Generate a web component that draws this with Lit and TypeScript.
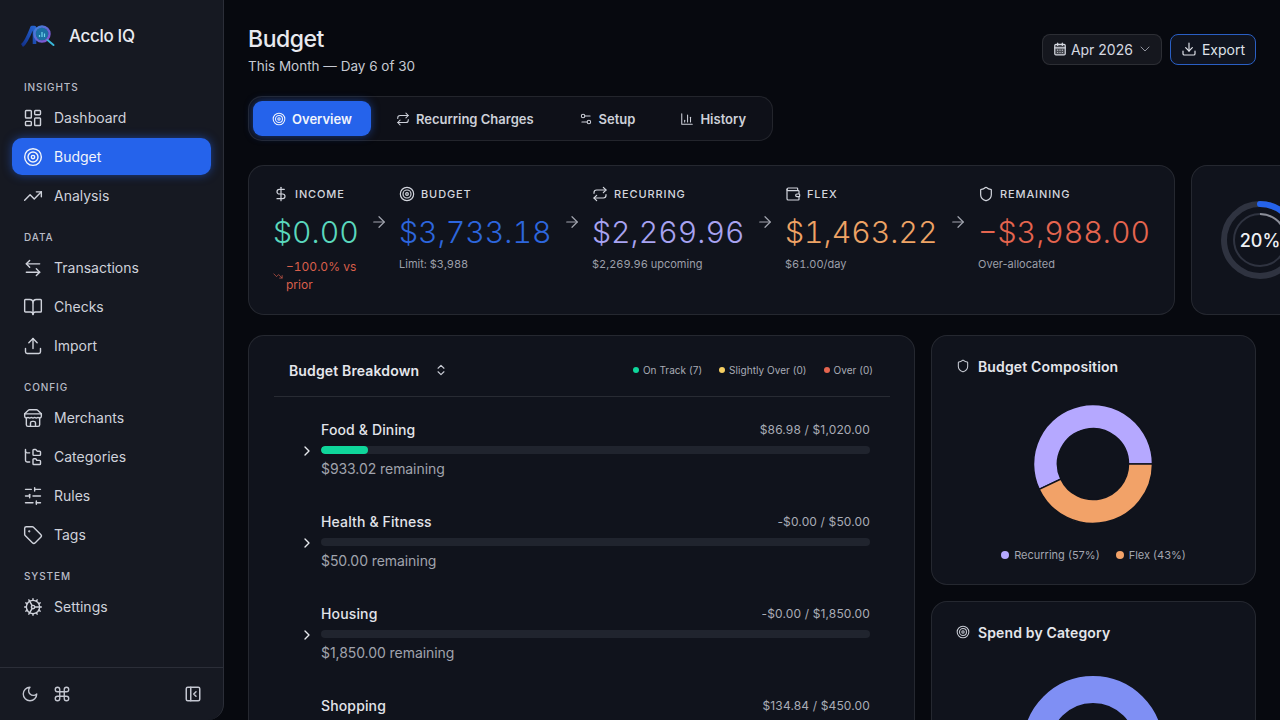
import { LitElement, css, html, svg } from "lit";
import { customElement } from "lit/decorators.js";

const ICONS: Record<string, any> = {
  dashboard: svg`<rect width="7" height="9" x="3" y="3" rx="1"/><rect width="7" height="5" x="14" y="3" rx="1"/><rect width="7" height="9" x="14" y="12" rx="1"/><rect width="7" height="5" x="3" y="16" rx="1"/>`,
  target: svg`<circle cx="12" cy="12" r="10"/><circle cx="12" cy="12" r="6"/><circle cx="12" cy="12" r="2"/>`,
  trending: svg`<polyline points="22 7 13.5 15.5 8.5 10.5 2 17"/><polyline points="16 7 22 7 22 13"/>`,
  trendingDown: svg`<polyline points="22 17 13.5 8.5 8.5 13.5 2 7"/><polyline points="16 17 22 17 22 11"/>`,
  transfer: svg`<path d="M8 3 4 7l4 4"/><path d="M4 7h16"/><path d="m16 21 4-4-4-4"/><path d="M20 17H4"/>`,
  book: svg`<path d="M12 7v14"/><path d="M3 18a1 1 0 0 1-1-1V4a1 1 0 0 1 1-1h5a4 4 0 0 1 4 4 4 4 0 0 1 4-4h5a1 1 0 0 1 1 1v13a1 1 0 0 1-1 1h-6a3 3 0 0 0-3 3 3 3 0 0 0-3-3z"/>`,
  upload: svg`<path d="M21 15v4a2 2 0 0 1-2 2H5a2 2 0 0 1-2-2v-4"/><path d="m17 8-5-5-5 5"/><path d="M12 3v12"/>`,
  store: svg`<path d="m2 7 4.41-4.41A2 2 0 0 1 7.83 2h8.34a2 2 0 0 1 1.42.59L22 7"/><path d="M4 12v8a2 2 0 0 0 2 2h12a2 2 0 0 0 2-2v-8"/><path d="M15 22v-4a2 2 0 0 0-2-2h-2a2 2 0 0 0-2 2v4"/><path d="M2 7h20"/><path d="M22 7v3a2 2 0 0 1-2 2 2.7 2.7 0 0 1-1.59-.63.7.7 0 0 0-.82 0A2.7 2.7 0 0 1 16 12a2.7 2.7 0 0 1-1.59-.63.7.7 0 0 0-.82 0A2.7 2.7 0 0 1 12 12a2.7 2.7 0 0 1-1.59-.63.7.7 0 0 0-.82 0A2.7 2.7 0 0 1 8 12a2.7 2.7 0 0 1-1.59-.63.7.7 0 0 0-.82 0A2.7 2.7 0 0 1 4 12a2 2 0 0 1-2-2V7"/>`,
  folders: svg`<path d="M20 10a1 1 0 0 0 1-1V6a1 1 0 0 0-1-1h-2.5a1 1 0 0 1-.8-.4l-.9-1.2A1 1 0 0 0 15 3h-2a1 1 0 0 0-1 1v5a1 1 0 0 0 1 1Z"/><path d="M20 21a1 1 0 0 0 1-1v-3a1 1 0 0 0-1-1h-2.9a1 1 0 0 1-.88-.55l-.42-.85a1 1 0 0 0-.92-.6H13a1 1 0 0 0-1 1v5a1 1 0 0 0 1 1Z"/><path d="M3 5a2 2 0 0 0 2 2h3"/><path d="M3 3v13a2 2 0 0 0 2 2h3"/>`,
  sliders: svg`<path d="M21 4h-7"/><path d="M10 4H3"/><path d="M21 12h-9"/><path d="M8 12H3"/><path d="M21 20h-5"/><path d="M12 20H3"/><path d="M14 2v4"/><path d="M8 10v4"/><path d="M16 18v4"/>`,
  tag: svg`<path d="M12.586 2.586A2 2 0 0 0 11.172 2H4a2 2 0 0 0-2 2v7.172a2 2 0 0 0 .586 1.414l8.704 8.704a2.426 2.426 0 0 0 3.42 0l6.58-6.58a2.426 2.426 0 0 0 0-3.42z"/><circle cx="7.5" cy="7.5" r=".5" fill="currentColor"/>`,
  cog: svg`<path d="M12 20a8 8 0 1 0 0-16 8 8 0 0 0 0 16Z"/><path d="M12 14a2 2 0 1 0 0-4 2 2 0 0 0 0 4Z"/><path d="M12 2v2"/><path d="M12 22v-2"/><path d="m17 20.66-1-1.73"/><path d="M11 10.27 7 3.34"/><path d="m20.66 17-1.73-1"/><path d="m3.34 7 1.73 1"/><path d="M14 12h8"/><path d="M2 12h2"/><path d="m20.66 7-1.73 1"/><path d="m3.34 17 1.73-1"/><path d="m17 3.34-1 1.73"/><path d="m11 13.73-4 6.93"/>`,
  moon: svg`<path d="M12 3a6 6 0 0 0 9 9 9 9 0 1 1-9-9Z"/>`,
  command: svg`<path d="M15 6v12a3 3 0 1 0 3-3H6a3 3 0 1 0 3 3V6a3 3 0 1 0-3 3h12a3 3 0 1 0-3-3"/>`,
  panel: svg`<rect width="18" height="18" x="3" y="3" rx="2"/><path d="M9 3v18"/><path d="m16 15-3-3 3-3"/>`,
  repeat: svg`<path d="m17 2 4 4-4 4"/><path d="M3 11v-1a4 4 0 0 1 4-4h14"/><path d="m7 22-4-4 4-4"/><path d="M21 13v1a4 4 0 0 1-4 4H3"/>`,
  setup: svg`<path d="M14 17H5"/><path d="M19 7h-9"/><circle cx="17" cy="17" r="3"/><circle cx="7" cy="7" r="3"/>`,
  chart: svg`<path d="M3 3v18h18"/><path d="M18 17V9"/><path d="M13 17V5"/><path d="M8 17v-3"/>`,
  dollar: svg`<path d="M12 2v20"/><path d="M17 5H9.5a3.5 3.5 0 0 0 0 7h5a3.5 3.5 0 0 1 0 7H6"/>`,
  wallet: svg`<path d="M19 7V4a1 1 0 0 0-1-1H5a2 2 0 0 0 0 4h15a1 1 0 0 1 1 1v4h-3a2 2 0 0 0 0 4h3a1 1 0 0 0 1-1v-2a1 1 0 0 0-1-1"/><path d="M3 5v14a2 2 0 0 0 2 2h15a1 1 0 0 0 1-1v-4"/>`,
  shield: svg`<path d="M20 13c0 5-3.5 7.5-7.66 8.95a1 1 0 0 1-.67-.01C7.5 20.5 4 18 4 13V6a1 1 0 0 1 1-1c2 0 4.5-1.2 6.24-2.72a1.17 1.17 0 0 1 1.52 0C14.51 3.81 17 5 19 5a1 1 0 0 1 1 1z"/>`,
  arrow: svg`<path d="M5 12h14"/><path d="m12 5 7 7-7 7"/>`,
  calendar: svg`<path d="M8 2v4"/><path d="M16 2v4"/><rect width="18" height="18" x="3" y="4" rx="2" fill="currentColor" fill-opacity=".25"/><path d="M3 10h18"/><path d="M8 14h.01"/><path d="M12 14h.01"/><path d="M16 14h.01"/><path d="M8 18h.01"/><path d="M12 18h.01"/><path d="M16 18h.01"/>`,
  chevronDown: svg`<path d="m6 9 6 6 6-6"/>`,
  chevronRight: svg`<path d="m9 18 6-6-6-6"/>`,
  chevrons: svg`<path d="m7 15 5 5 5-5"/><path d="m7 9 5-5 5 5"/>`,
  download: svg`<path d="M21 15v4a2 2 0 0 1-2 2H5a2 2 0 0 1-2-2v-4"/><path d="m7 10 5 5 5-5"/><path d="M12 15V3"/>`,
};

const icon = (name: string, size = 20, width = 2) => html`<svg
  class="ic"
  width=${size}
  height=${size}
  viewBox="0 0 24 24"
  fill="none"
  stroke="currentColor"
  stroke-width=${width}
  stroke-linecap="round"
  stroke-linejoin="round"
>${ICONS[name]}</svg>`;

const NAV = [
  { title: "INSIGHTS", items: [["dashboard", "Dashboard"], ["target", "Budget"], ["trending", "Analysis"]] },
  { title: "DATA", items: [["transfer", "Transactions"], ["book", "Checks"], ["upload", "Import"]] },
  { title: "CONFIG", items: [["store", "Merchants"], ["folders", "Categories"], ["sliders", "Rules"], ["tag", "Tags"]] },
  { title: "SYSTEM", items: [["cog", "Settings"]] },
];

const TABS = [["target", "Overview"], ["repeat", "Recurring Charges"], ["setup", "Setup"], ["chart", "History"]];

const STATS = [
  { icon: "dollar", label: "INCOME", value: "$0.00", cls: "income", sub: "" },
  { icon: "target", label: "BUDGET", value: "$3,733.18", cls: "budget", sub: "Limit: $3,988" },
  { icon: "repeat", label: "RECURRING", value: "$2,269.96", cls: "recurring", sub: "$2,269.96 upcoming" },
  { icon: "wallet", label: "FLEX", value: "$1,463.22", cls: "flex", sub: "$61.00/day" },
  { icon: "shield", label: "REMAINING", value: "−$3,988.00", cls: "remaining", sub: "Over-allocated" },
];

const ROWS = [
  { name: "Food & Dining", spent: 86.98, amount: "$86.98 / $1,020.00", limit: 1020, left: "$933.02 remaining" },
  { name: "Health & Fitness", spent: 0, amount: "-$0.00 / $50.00", limit: 50, left: "$50.00 remaining" },
  { name: "Housing", spent: 0, amount: "-$0.00 / $1,850.00", limit: 1850, left: "$1,850.00 remaining" },
  { name: "Shopping", spent: 134.84, amount: "$134.84 / $450.00", limit: 450, left: "" },
];

// donut slice, angles in degrees counter-clockwise from 3 o'clock
function slice(cx: number, cy: number, R: number, r: number, a0: number, a1: number) {
  const pt = (rad: number, a: number) => {
    const t = (a * Math.PI) / 180;
    return `${(cx + rad * Math.cos(t)).toFixed(2)} ${(cy - rad * Math.sin(t)).toFixed(2)}`;
  };
  const large = a1 - a0 > 180 ? 1 : 0;
  return `M${pt(R, a0)}A${R} ${R} 0 ${large} 0 ${pt(R, a1)}L${pt(r, a1)}A${r} ${r} 0 ${large} 1 ${pt(r, a0)}Z`;
}

@customElement("app-root")
export class AppRoot extends LitElement {
  static styles = css`
    :host {
      display: flex;
      width: 1280px;
      height: 720px;
      overflow: hidden;
      background: #07090f;
      color: #e6e8ee;
      font-family: Inter, "Noto Sans", sans-serif;
    }
    .ic {
      flex: none;
      display: block;
    }
    .sidebar {
      flex: 0 0 224px;
      box-sizing: border-box;
      height: 720px;
      display: flex;
      flex-direction: column;
      background: #161922;
      border-right: 1px solid #2b2e38;
      border-bottom-right-radius: 16px;
    }
    .brand {
      height: 72px;
      display: flex;
      align-items: center;
      gap: 13px;
      padding-left: 22px;
      font-size: 17px;
      font-weight: 500;
      letter-spacing: -0.02em;
      color: #e9ebf0;
    }
    .nav {
      flex: 1;
      padding: 8px 12px 0;
      display: flex;
      flex-direction: column;
      gap: 16px;
    }
    .group-title {
      height: 14px;
      line-height: 14px;
      margin: 0 0 5px 12px;
      font-size: 10px;
      font-weight: 500;
      letter-spacing: 0.09em;
      color: #b9bcc7;
    }
    .group-items {
      display: flex;
      flex-direction: column;
      gap: 2px;
    }
    .nav-item {
      height: 37px;
      display: flex;
      align-items: center;
      gap: 11px;
      padding-left: 11px;
      border-radius: 10px;
      font-size: 14px;
      color: #cfd2db;
    }
    .nav-item.active {
      background: #2563eb;
      color: #f1f4fb;
      box-shadow: 0 0 10px rgba(37, 99, 235, 0.55);
    }
    .foot {
      flex: 0 0 53px;
      box-sizing: border-box;
      border-top: 1px solid #2b2e38;
      display: flex;
      align-items: center;
      gap: 14px;
      padding: 0 21px;
      color: #c4c7d1;
    }
    .foot .push {
      margin-left: auto;
    }
    .main {
      flex: 1;
      min-width: 0;
      box-sizing: border-box;
      height: 720px;
      padding: 24px 24px 0;
      overflow: hidden;
    }
    .head {
      display: flex;
      align-items: center;
      justify-content: space-between;
    }
    h1 {
      margin: 0 0 1px;
      font-size: 23px;
      line-height: 31px;
      font-weight: 500;
      letter-spacing: -0.02em;
      color: #e8eaef;
    }
    .subtitle {
      font-size: 13.5px;
      line-height: 20px;
      color: #c6c9d2;
    }
    .actions {
      display: flex;
      gap: 8px;
      margin-bottom: 2px;
    }
    .btn {
      height: 31px;
      display: flex;
      align-items: center;
      gap: 4px;
      padding: 0 8px 0 10px;
      border-radius: 8px;
      border: 1px solid rgba(255, 255, 255, 0.1);
      background: #15171e;
      font-size: 14px;
      color: #d6d9e1;
      box-sizing: border-box;
    }
    .btn.export {
      border-color: #2a5fc4;
      background: #10141f;
      color: #dfe2e9;
      gap: 5px;
      padding: 0 10px;
    }
    .btn .muted {
      color: #8f929c;
    }
    .tabs {
      display: inline-flex;
      gap: 5px;
      margin-top: 20px;
      padding: 4px 6px 4px 4px;
      border: 1px solid rgba(255, 255, 255, 0.09);
      border-radius: 14px;
      background: #0e1018;
      vertical-align: top;
    }
    .tab {
      height: 35px;
      display: flex;
      align-items: center;
      gap: 6px;
      padding: 0 20px;
      border-radius: 9px;
      font-size: 13px;
      font-weight: 600;
      color: #cdd0d9;
    }
    .tab.active {
      padding: 0 19px;
      background: #2563eb;
      color: #f1f4fb;
      box-shadow: 0 0 8px rgba(37, 99, 235, 0.5);
    }
    .card {
      box-sizing: border-box;
      background: #10131c;
      border: 1px solid rgba(255, 255, 255, 0.09);
      border-radius: 16px;
    }
    .stats-row {
      display: flex;
      gap: 16px;
      margin-top: 24px;
    }
    .stats {
      flex: 0 0 927px;
      min-width: 0;
      display: flex;
      align-items: flex-start;
      padding: 20px 0 20px 24px;
    }
    .stat {
      flex: none;
      min-width: 153px;
    }
    .stat.first {
      min-width: 0;
      width: 86px;
    }
    .stat-label {
      height: 16px;
      display: flex;
      align-items: center;
      gap: 6px;
      font-size: 11px;
      font-weight: 500;
      letter-spacing: 0.08em;
      color: #d3d6de;
    }
    .value {
      margin-top: 10px;
      font-size: 30.2px;
      line-height: 40px;
      font-weight: 300;
      font-variant-numeric: tabular-nums;
      white-space: nowrap;
    }
    .income {
      color: #5ad8bd;
    }
    .budget {
      color: #2d66dd;
    }
    .recurring {
      color: #a8a3f2;
    }
    .flex {
      color: #eea365;
    }
    .remaining {
      color: #e5654f;
    }
    .sub {
      margin-top: 4px;
      font-size: 11px;
      line-height: 16px;
      font-variant-numeric: tabular-nums;
      color: #9c9fa9;
    }
    .sub.plain {
      font-variant-numeric: normal;
    }
    .delta {
      margin-top: 6px;
      display: flex;
      align-items: center;
      gap: 3px;
      font-size: 12px;
      line-height: 18px;
      font-variant-numeric: tabular-nums;
      color: #d95f4b;
    }
    .link {
      flex: 0 0 40px;
      display: flex;
      justify-content: center;
      margin-top: 27px;
      color: #a3a6b0;
    }
    .ring-card {
      flex: 0 0 138px;
      display: flex;
      align-items: center;
      justify-content: center;
    }
    .ring {
      position: relative;
      width: 80px;
      height: 80px;
      flex: none;
    }
    .ring-text {
      position: absolute;
      inset: 0;
      display: flex;
      align-items: center;
      justify-content: center;
      font-size: 18px;
      font-weight: 500;
      color: #eef0f4;
    }
    .lower {
      display: grid;
      grid-template-columns: 667px 325px;
      gap: 16px;
      margin-top: 20px;
      align-items: start;
    }
    .breakdown {
      padding: 10px 24px 40px 25px;
    }
    .bd-head {
      height: 48px;
      display: flex;
      align-items: center;
      padding: 0 17px 2px 15px;
      border-bottom: 1px solid rgba(255, 255, 255, 0.1);
    }
    .bd-title {
      font-size: 14px;
      font-weight: 600;
      letter-spacing: 0.01em;
      color: #e4e6eb;
    }
    .bd-sort {
      margin-left: 15px;
      color: #c8cbd4;
    }
    .legend {
      margin-left: auto;
      display: flex;
      gap: 17px;
      font-size: 10px;
      letter-spacing: 0.005em;
      color: #a9acb6;
    }
    .legend span {
      display: flex;
      align-items: center;
      gap: 4px;
    }
    .dot {
      width: 6px;
      height: 6px;
      border-radius: 50%;
      flex: none;
    }
    .rows {
      padding-top: 7px;
    }
    .row {
      display: flex;
      align-items: center;
      gap: 6px;
      padding: 16px 20px 17px 25px;
    }
    .row > .ic {
      margin-top: 3px;
      color: #e8eaef;
    }
    .row-body {
      flex: 1;
      min-width: 0;
      min-height: 59px;
    }
    .row-top {
      height: 19px;
      display: flex;
      align-items: center;
      justify-content: space-between;
    }
    .row-name {
      font-size: 14px;
      font-weight: 500;
      letter-spacing: 0.01em;
      color: #e2e4ea;
    }
    .row-amount {
      font-size: 12px;
      letter-spacing: 0.012em;
      color: #a9acb6;
    }
    .track {
      height: 8px;
      margin-top: 7px;
      border-radius: 4px;
      background: #20242e;
      overflow: hidden;
    }
    .fill {
      height: 100%;
      border-radius: 4px;
      background: #0fd69b;
    }
    .row-left {
      margin-top: 5px;
      font-size: 14px;
      line-height: 20px;
      letter-spacing: -0.005em;
      color: #a0a3ad;
    }
    .side {
      display: flex;
      flex-direction: column;
      gap: 16px;
    }
    .side-card {
      padding: 23px 24px 24px;
    }
    .comp {
      height: 250px;
    }
    .spend {
      height: 300px;
    }
    .side-title {
      display: flex;
      align-items: center;
      gap: 8px;
      height: 14px;
      font-size: 14px;
      font-weight: 600;
      letter-spacing: 0.01em;
      color: #e4e6eb;
    }
    .side-title .ic {
      color: #c8cbd4;
    }
    .chart {
      display: flex;
      justify-content: center;
      padding-right: 1px;
      margin-top: 31px;
    }
    .chart.big {
      margin-top: 36px;
    }
    .comp-legend {
      margin-top: 25px;
      height: 12px;
      display: flex;
      justify-content: center;
      gap: 16px;
      font-size: 11px;
      color: #a3a6b0;
    }
    .comp-legend span {
      display: flex;
      align-items: center;
      gap: 5px;
    }
    .comp-legend .dot {
      width: 8px;
      height: 8px;
    }
  `;

  private logo() {
    return html`<svg width="34" height="24" viewBox="0 0 34 24" fill="none" style="overflow:visible">
      <defs>
        <linearGradient id="lg-a" x1="0" y1="1" x2="1" y2="0">
          <stop offset="0" stop-color="#12308a" />
          <stop offset="1" stop-color="#2563d0" />
        </linearGradient>
        <linearGradient id="lg-q" x1="0" y1="0" x2="1" y2="1">
          <stop offset="0" stop-color="#3b82d8" />
          <stop offset="1" stop-color="#8a4fd0" />
        </linearGradient>
      </defs>
      <path d="M0 21.5 C4 19 7 11 10 3.5 L12.5 3.5 L12.5 20" stroke="url(#lg-a)" stroke-width="3.6" stroke-linejoin="round" />
      <circle cx="20" cy="10" r="6.5" fill="#1b6fa3" />
      <circle cx="20" cy="10" r="7.5" stroke="url(#lg-q)" stroke-width="2.4" />
      <path d="M17.5 13v-2M20 13V8M22.5 13V9.5" stroke="#6fd3ea" stroke-width="1.2" />
      <path d="M25.5 16l6 5" stroke="#38b6d8" stroke-width="2" stroke-linecap="round" />
    </svg>`;
  }

  private sidebar() {
    return html`<aside class="sidebar">
      <div class="brand">${this.logo()}<span>Acclo IQ</span></div>
      <nav class="nav">
        ${NAV.map(
          (g) => html`<div>
            <div class="group-title">${g.title}</div>
            <div class="group-items">
              ${g.items.map(
                ([ic, label]) => html`<div class="nav-item ${label === "Budget" ? "active" : ""}">
                  ${icon(ic, 20, 1.7)}<span>${label}</span>
                </div>`
              )}
            </div>
          </div>`
        )}
      </nav>
      <div class="foot">
        ${icon("moon", 18, 1.8)} ${icon("command", 18, 1.8)}
        <span class="push">${icon("panel", 18, 2)}</span>
      </div>
    </aside>`;
  }

  private statsCard() {
    return html`<section class="card stats">
      ${STATS.map(
        (s, i) => html`
          ${i > 0 ? html`<div class="link">${icon("arrow", 18, 1.6)}</div>` : ""}
          <div class="stat ${i === 0 ? "first" : ""}">
            <div class="stat-label">${icon(s.icon, 16, 1.8)}<span>${s.label}</span></div>
            <div class="value ${s.cls}">${s.value}</div>
            ${i === 0
              ? html`<div class="delta">${icon("trendingDown", 10, 1.6)}<span>−100.0% vs prior</span></div>`
              : html`<div class="sub ${i === 4 ? "plain" : ""}">${s.sub}</div>`}
          </div>
        `
      )}
    </section>`;
  }

  private ringCard() {
    const c1 = 2 * Math.PI * 36;
    const c2 = 2 * Math.PI * 26;
    return html`<section class="card ring-card">
      <div class="ring">
        <svg width="80" height="80" viewBox="0 0 80 80" fill="none">
          <circle cx="40" cy="40" r="36" stroke="#2f3340" stroke-width="6" />
          <circle
            cx="40"
            cy="40"
            r="36"
            stroke="#2563eb"
            stroke-width="6"
            stroke-linecap="round"
            stroke-dasharray="${c1 * 0.2} ${c1}"
            transform="rotate(-90 40 40)"
          />
          <circle cx="40" cy="40" r="26" stroke="#2f3340" stroke-width="2" />
          <circle
            cx="40"
            cy="40"
            r="26"
            stroke="#8b8e98"
            stroke-width="2"
            stroke-dasharray="${c2 * 0.2} ${c2}"
            transform="rotate(-90 40 40)"
          />
        </svg>
        <div class="ring-text">20%</div>
      </div>
    </section>`;
  }

  private breakdown() {
    return html`<section class="card breakdown">
      <div class="bd-head">
        <span class="bd-title">Budget Breakdown</span>
        <span class="bd-sort">${icon("chevrons", 14, 2)}</span>
        <div class="legend">
          <span><i class="dot" style="background:#0fd69b"></i>On Track (7)</span>
          <span><i class="dot" style="background:#f6cf62"></i>Slightly Over (0)</span>
          <span><i class="dot" style="background:#e5654f"></i>Over (0)</span>
        </div>
      </div>
      <div class="rows">
        ${ROWS.map(
          (r) => html`<div class="row">
            ${icon("chevronRight", 16, 2)}
            <div class="row-body">
              <div class="row-top">
                <span class="row-name">${r.name}</span>
                <span class="row-amount">${r.amount}</span>
              </div>
              <div class="track"><div class="fill" style="width:${(r.spent / r.limit) * 100}%"></div></div>
              ${r.left ? html`<div class="row-left">${r.left}</div>` : ""}
            </div>
          </div>`
        )}
      </div>
    </section>`;
  }

  private sideCards() {
    const split = 0.57 * 360;
    return html`<div class="side">
      <section class="card side-card comp">
        <div class="side-title">${icon("shield", 14, 1.8)}<span>Budget Composition</span></div>
        <div class="chart">
          <svg width="120" height="120" viewBox="0 0 120 120">
            <path d=${slice(60, 60, 59.5, 35.5, 0, split)} fill="#b5a8ff" stroke="#10131c" stroke-width="1.5" />
            <path d=${slice(60, 60, 59.5, 35.5, split, 360)} fill="#f2a268" stroke="#10131c" stroke-width="1.5" />
          </svg>
        </div>
        <div class="comp-legend">
          <span><i class="dot" style="background:#b5a8ff"></i>Recurring (57%)</span>
          <span><i class="dot" style="background:#f2a268"></i>Flex (43%)</span>
        </div>
      </section>
      <section class="card side-card spend">
        <div class="side-title">${icon("target", 14, 1.8)}<span>Spend by Category</span></div>
        <div class="chart big">
          <svg width="142" height="142" viewBox="0 0 142 142">
            <circle cx="71" cy="71" r="56.5" fill="none" stroke="#7f8ff4" stroke-width="27" />
          </svg>
        </div>
      </section>
    </div>`;
  }

  render() {
    return html`
      ${this.sidebar()}
      <main class="main">
        <header class="head">
          <div>
            <h1>Budget</h1>
            <div class="subtitle">This Month — Day 6 of 30</div>
          </div>
          <div class="actions">
            <div class="btn">
              ${icon("calendar", 14, 2)}<span>Apr 2026</span><span class="muted">${icon("chevronDown", 16, 1.5)}</span>
            </div>
            <div class="btn export">${icon("download", 16, 1.8)}<span>Export</span></div>
          </div>
        </header>
        <div class="tabs">
          ${TABS.map(
            ([ic, label], i) => html`<div class="tab ${i === 0 ? "active" : ""}">${icon(ic, 14, 1.8)}<span>${label}</span></div>`
          )}
        </div>
        <div class="stats-row">${this.statsCard()}${this.ringCard()}</div>
        <div class="lower">${this.breakdown()}${this.sideCards()}</div>
      </main>
    `;
  }
}
